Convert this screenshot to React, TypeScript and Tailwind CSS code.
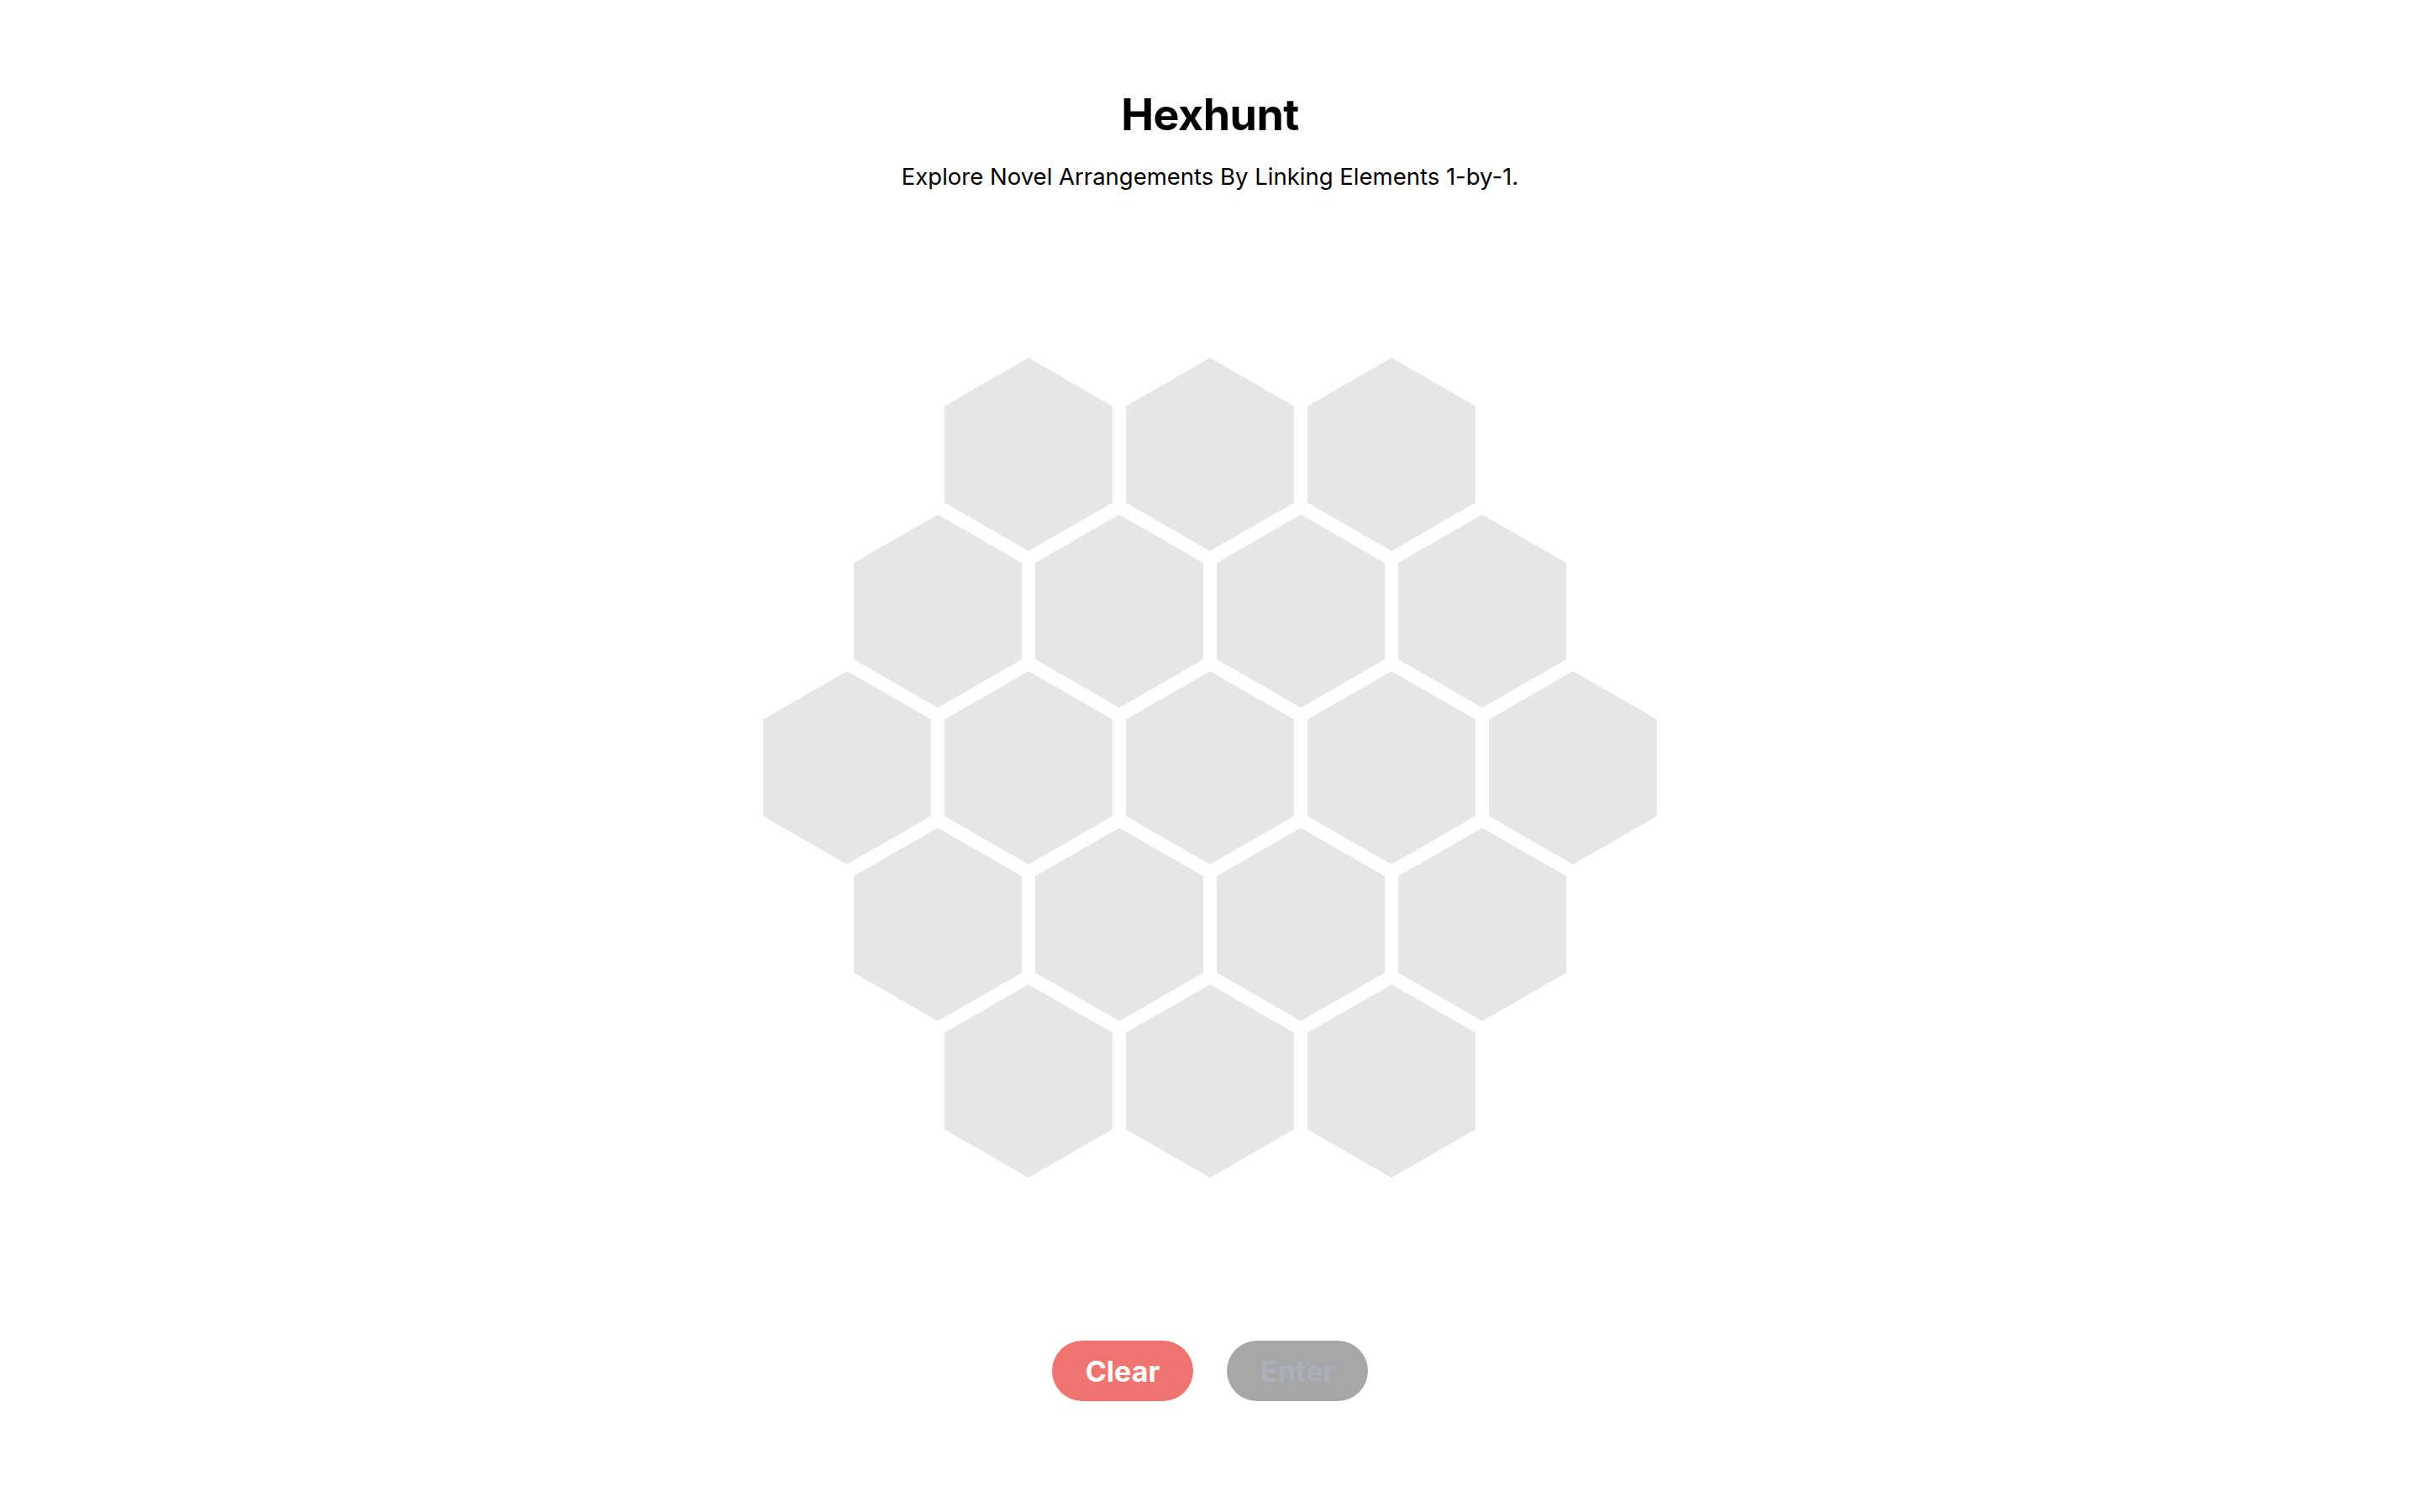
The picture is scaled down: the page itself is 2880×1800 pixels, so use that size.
import React from "react";

const ROWS = [3, 4, 5, 4, 3];

const Hex: React.FC = () => (
  <div className="w-[200px] h-[230px] shrink-0 bg-[#e6e6e6] cursor-pointer [clip-path:polygon(50%_0,100%_25%,100%_75%,50%_100%,0_75%,0_25%)]" />
);

export default function App() {
  return (
    <div
      className="min-h-screen w-full bg-white flex flex-col items-center text-black"
      style={{ fontFamily: "Inter, 'Noto Sans', sans-serif" }}
    >
      <h1 className="pt-[106px] text-[52px] leading-[62px] font-bold tracking-[-0.5px]">
        Hexhunt
      </h1>
      <p className="mt-[22px] text-[27.5px] leading-[40px]">
        Explore Novel Arrangements By Linking Elements 1-by-1.
      </p>

      <div className="mt-[196px] flex flex-col items-center">
        {ROWS.map((count, r) => (
          <div
            key={r}
            className={`flex gap-[16px] ${r === 0 ? "" : "-mt-[43.5px]"}`}
          >
            {Array.from({ length: count }).map((_, i) => (
              <Hex key={i} />
            ))}
          </div>
        ))}
      </div>

      <div className="mt-[194px] flex gap-[40px]">
        <button className="h-[72px] px-[40px] rounded-full bg-[#ef7470] text-white text-[34px] font-bold">
          Clear
        </button>
        <button
          disabled
          className="h-[72px] px-[40px] rounded-full bg-[#a6a6a6] text-[#aab0ba] text-[34px] font-bold"
        >
          Enter
        </button>
      </div>
    </div>
  );
}
